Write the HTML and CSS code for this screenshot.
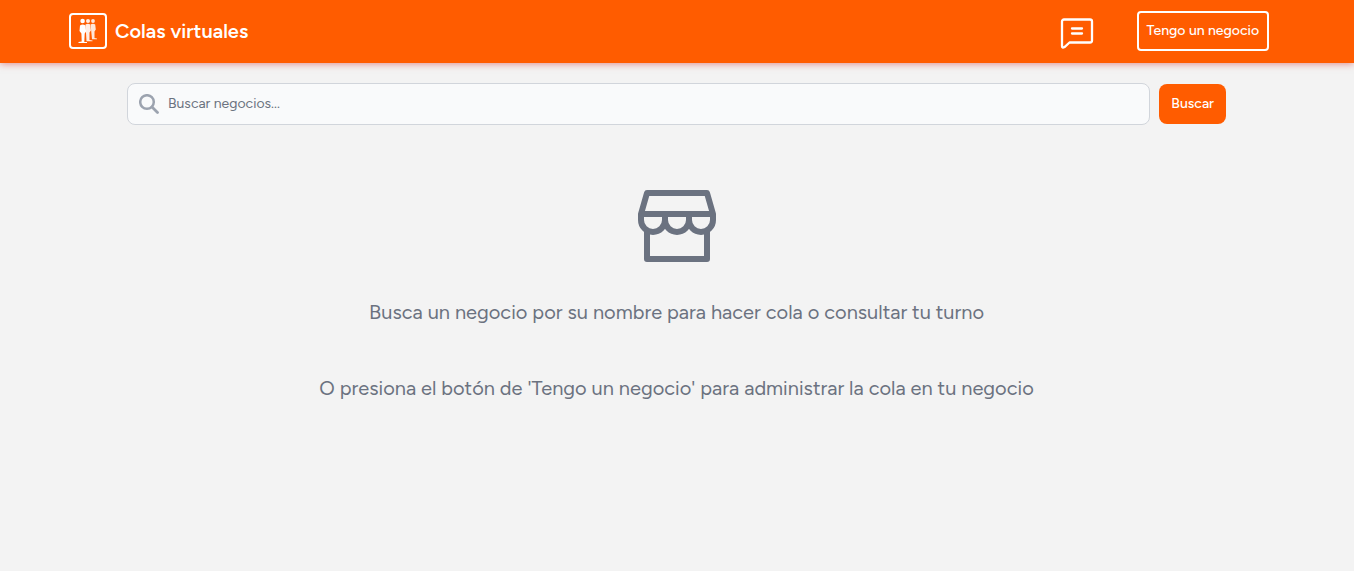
FILE: index.html
```html
<!DOCTYPE html>
<html lang="es">
<head>
<meta charset="utf-8">
<meta name="viewport" content="width=device-width, initial-scale=1">
<title>Colas virtuales</title>
<link rel="stylesheet" href="styles.css">
</head>
<body>
<header class="topbar">
  <a class="brand" href="#">
    <span class="brand-mark">
      <svg width="20" height="26" viewBox="0 0 20 26" fill="#fff" aria-hidden="true">
        <g opacity=".85"><circle cx="15" cy="3" r="1.9"/><path d="M12.600 6.500q2.400-1.500 4.600 0l.6 5-1.300 2v6.500l2.500.5v.8h-5z"/></g>
        <g opacity=".9"><circle cx="10" cy="3" r="2"/><path d="M7.500 6.500q2.500-1.500 4.700 0l.7 6-1.400 2v7.500l3 .4v.8H8.500z"/></g>
        <circle cx="4.600" cy="3" r="2.300"/>
        <path d="M2 7.500q2.600-2 5.500 0l.6 6-1.400 2-.4 8.500h2.700v1H.5v-1l3.200-.5-.3-8-1.900-2.500z"/>
      </svg>
    </span>
    <span class="brand-name">Colas virtuales</span>
  </a>
  <nav class="actions" aria-label="Principal">
    <a class="chat" href="#" aria-label="Comentarios">
      <svg width="34" height="32" viewBox="0 0 34 32" fill="none" stroke="#fff" stroke-width="2.300" stroke-linecap="round" stroke-linejoin="round" aria-hidden="true">
        <path d="M4 2.500h26a2 2 0 0 1 2 2v19a2 2 0 0 1-2 2H9.500l-5 4.600Q2 31.500 2 29V4.500a2 2 0 0 1 2-2z"/>
        <path d="M12 11.500h10M12 16.500h10"/>
      </svg>
    </a>
    <button class="business" type="button">Tengo un negocio</button>
  </nav>
</header>
<main class="content">
  <form class="search" role="search">
    <div class="field">
      <svg class="lens" width="20" height="20" viewBox="0 0 20 20" fill="none" stroke="#9ca3af" aria-hidden="true">
        <circle cx="8" cy="8" r="6.800" stroke-width="2.500"/>
        <path d="M13 13l5.500 5.500" stroke-width="2.800" stroke-linecap="round"/>
      </svg>
      <input class="query" type="text" placeholder="Buscar negocios..." aria-label="Buscar negocios">
    </div>
    <button class="submit" type="submit">Buscar</button>
  </form>
  <section class="empty">
    <svg class="store" width="78" height="72" viewBox="0 0 78 72" fill="none" stroke="#6b7280" stroke-width="6" stroke-linejoin="round" aria-hidden="true">
      <path d="M9 40v29h60V40"/>
      <path d="M3 24L9 3h60l6 21v6a12 12 0 0 1-24 0 12 12 0 0 1-24 0 12 12 0 0 1-24 0zh72M27 24v6M51 24v6"/>
    </svg>
    <p class="hint">Busca un negocio por su nombre para hacer cola o consultar tu turno</p>
    <p class="hint">O presiona el botón de 'Tengo un negocio' para administrar la cola en tu negocio</p>
  </section>
</main>
</body>
</html>
```
FILE: styles.css
```css
* {
  box-sizing: border-box;
}

body {
  margin: 0;
  background: #f3f3f3;
  color: #6b7280;
  font-family: Figtree, Roboto, sans-serif;
  font-size: 14px;
  line-height: 20px;
}

button,
input {
  font: inherit;
}

.topbar {
  display: flex;
  align-items: center;
  justify-content: space-between;
  padding: 11px 85px 12px 69px;
  background: #ff5c00;
  box-shadow: 0 1px 7px rgba(210, 40, 40, 0.5);
}

.brand {
  display: flex;
  align-items: center;
  gap: 8px;
  color: #fff;
  text-decoration: none;
}

.brand-mark {
  display: flex;
  align-items: center;
  justify-content: center;
  width: 38px;
  height: 36px;
  border: 2px solid #fff;
  border-radius: 4px;
}

.brand-name {
  font-size: 20px;
  font-weight: 600;
  line-height: 28px;
}

.actions {
  display: flex;
  align-items: center;
  gap: 43px;
}

.chat {
  display: flex;
  padding-top: 4px;
}

.business {
  height: 40px;
  padding: 0 8px;
  border: 2px solid #fff;
  border-radius: 4px;
  background: transparent;
  color: #fff;
  font-weight: 500;
}

.content {
  padding: 20px 128px 0 127px;
}

.search {
  display: flex;
  align-items: center;
  gap: 9px;
}

.field {
  display: flex;
  flex: 1;
  align-items: center;
  gap: 9px;
  height: 42px;
  padding: 0 11px;
  border: 1px solid #d1d5db;
  border-radius: 8px;
  background: #f9fafb;
}

.query {
  flex: 1;
  min-width: 0;
  padding: 0;
  border: 0;
  outline: 0;
  background: transparent;
  color: #111827;
}

.query::placeholder {
  color: #6b7280;
  opacity: 1;
}

.submit {
  height: 40px;
  padding: 0 12px;
  border: 0;
  border-radius: 8px;
  background: #ff5c00;
  color: #fff;
  font-weight: 500;
}

.empty {
  display: flex;
  flex-direction: column;
  align-items: center;
  gap: 48px;
  padding-top: 65px;
  text-align: center;
}

.store {
  margin-bottom: -12px;
}

.hint {
  margin: 0;
  font-size: 20px;
  line-height: 28px;
}
```
